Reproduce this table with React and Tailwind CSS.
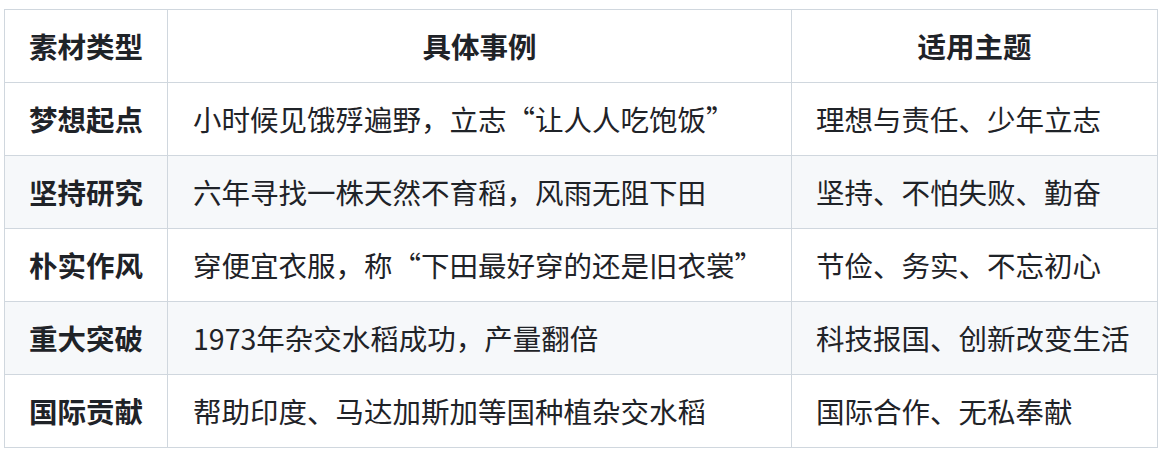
import React from 'react';

const rows = [
  ['梦想起点', '小时候见饿殍遍野，立志“让人人吃饱饭”', '理想与责任、少年立志'],
  ['坚持研究', '六年寻找一株天然不育稻，风雨无阻下田', '坚持、不怕失败、勤奋'],
  ['朴实作风', '穿便宜衣服，称“下田最好穿的还是旧衣裳”', '节俭、务实、不忘初心'],
  ['重大突破', '1973年杂交水稻成功，产量翻倍', '科技报国、创新改变生活'],
  ['国际贡献', '帮助印度、马达加斯加等国种植杂交水稻', '国际合作、无私奉献'],
];

export default function App() {
  return (
    <div
      className="w-[1172px] h-[472px] bg-white pt-[9px] pl-[4px] text-[#1f2328]"
      style={{ fontFamily: '"Noto Sans CJK SC", "Noto Sans", sans-serif' }}
    >
      <table className="border-collapse table-fixed w-[1153px] text-[28.5px] leading-none">
        <colgroup>
          <col className="w-[163px]" />
          <col className="w-[624px]" />
          <col className="w-[366px]" />
        </colgroup>
        <thead>
          <tr className="h-[73px]">
            <th className="border border-[#d0d7de] font-bold text-center">素材类型</th>
            <th className="border border-[#d0d7de] font-bold text-center">具体事例</th>
            <th className="border border-[#d0d7de] font-bold text-center">适用主题</th>
          </tr>
        </thead>
        <tbody>
          {rows.map((r, i) => (
            <tr key={i} className={`h-[73px] ${i % 2 === 1 ? 'bg-[#f6f8fa]' : 'bg-white'}`}>
              <td className="border border-[#d0d7de] font-bold text-center">{r[0]}</td>
              <td className="border border-[#d0d7de] pl-[25px] whitespace-nowrap">{r[1]}</td>
              <td className="border border-[#d0d7de] pl-[24px] whitespace-nowrap">{r[2]}</td>
            </tr>
          ))}
        </tbody>
      </table>
    </div>
  );
}
